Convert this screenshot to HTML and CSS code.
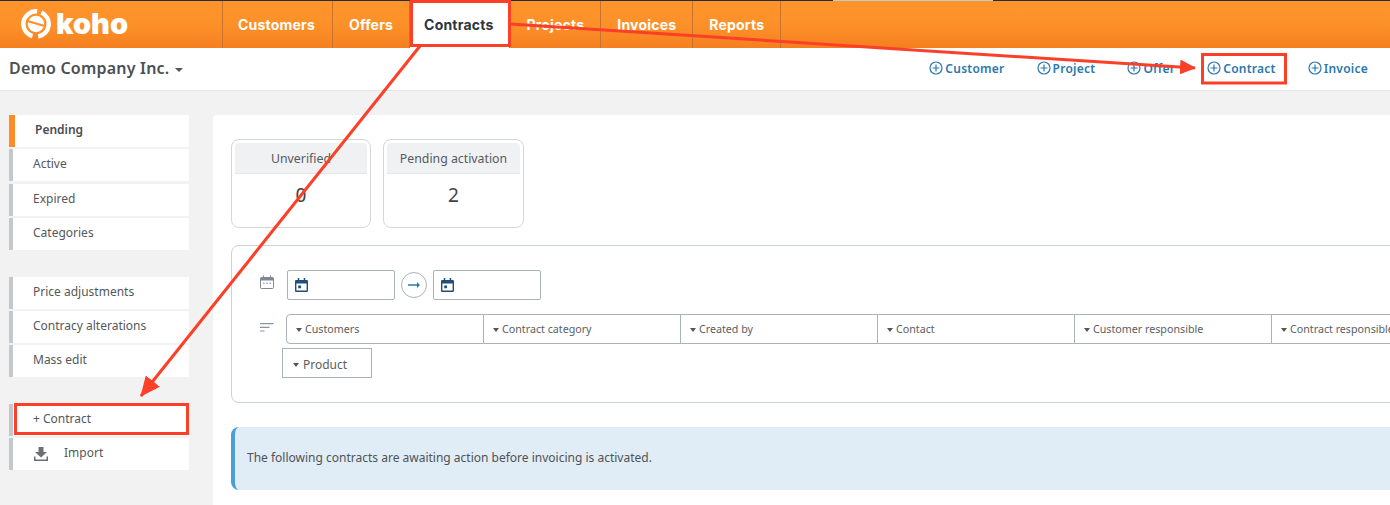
FILE: index.html
```html
<!DOCTYPE html>
<html lang="en">
<head>
<meta charset="utf-8">
<title>Contracts</title>
<link rel="stylesheet" href="styles.css">
</head>
<body>
<header class="topbar">
  <span class="top-sliver"></span>
  <a class="logo">
    <svg class="logo-mark" viewBox="0 0 30 30" width="30" height="30">
      <path d="M20.400 3.500A12.700 12.700 0 0 1 17.200 27.500" fill="none" stroke="#fff" stroke-width="4.500"/>
      <path d="M11.500 27.200A12.700 12.700 0 0 1 16.100 2.350" fill="none" stroke="#fff" stroke-width="4.500"/>
      <circle cx="15" cy="15" r="8.200" fill="#fff"/>
      <path d="M5.500 11.800L24.500 17.300" stroke="#fd8f28" stroke-width="2.200"/>
    </svg>
    <span class="logo-text">koho</span>
  </a>
  <nav class="mainnav">
    <a class="nav-item">Customers</a>
    <a class="nav-item">Offers</a>
    <a class="nav-item active">Contracts</a>
    <a class="nav-item">Projects</a>
    <a class="nav-item">Invoices</a>
    <a class="nav-item">Reports</a>
  </nav>
</header>

<div class="subbar">
  <div class="company">Demo Company Inc. <span class="caret caret-lg"></span></div>
  <div class="quick">
    <a class="quick-item"><svg class="plus" viewBox="0 0 14 14"><circle cx="7" cy="7" r="6"/><path d="M7 3.500v7M3.500 7h7"/></svg>Customer</a>
    <a class="quick-item"><svg class="plus" viewBox="0 0 14 14"><circle cx="7" cy="7" r="6"/><path d="M7 3.500v7M3.500 7h7"/></svg>Project</a>
    <a class="quick-item"><svg class="plus" viewBox="0 0 14 14"><circle cx="7" cy="7" r="6"/><path d="M7 3.500v7M3.500 7h7"/></svg>Offer</a>
    <a class="quick-item"><svg class="plus" viewBox="0 0 14 14"><circle cx="7" cy="7" r="6"/><path d="M7 3.500v7M3.500 7h7"/></svg>Contract</a>
    <a class="quick-item"><svg class="plus" viewBox="0 0 14 14"><circle cx="7" cy="7" r="6"/><path d="M7 3.500v7M3.500 7h7"/></svg>Invoice</a>
  </div>
</div>

<div class="layout">
  <aside class="sidebar">
    <ul class="side-group">
      <li class="side-item current">Pending</li>
      <li class="side-item">Active</li>
      <li class="side-item push">Expired</li>
      <li class="side-item">Categories</li>
    </ul>
    <ul class="side-group">
      <li class="side-item">Price adjustments</li>
      <li class="side-item">Contracy alterations</li>
      <li class="side-item">Mass edit</li>
    </ul>
    <ul class="side-group">
      <li class="side-item">+ Contract</li>
      <li class="side-item import">
        <svg class="import-icon" viewBox="0 0 14 14"><path d="M4.500 0h5v5h3.500L7 10.500 1 5h3.500z"/><path d="M0 9.500h1.500v3h11v-3H14V14H0z"/></svg>
        Import
      </li>
    </ul>
  </aside>

  <main class="panel">
    <section class="stats">
      <div class="stat">
        <div class="stat-head">Unverified</div>
        <div class="stat-value">0</div>
      </div>
      <div class="stat stat-wide">
        <div class="stat-head">Pending activation</div>
        <div class="stat-value">2</div>
      </div>
    </section>

    <section class="filters">
      <div class="filter-row">
        <svg class="row-icon" viewBox="0 0 14 14"><path d="M1.500 2.500h11a1 1 0 0 1 1 1v9a1 1 0 0 1-1 1h-11a1 1 0 0 1-1-1v-9a1 1 0 0 1 1-1z" fill="none" stroke="#7d8894"/><path d="M.5 3.500a1 1 0 0 1 1-1h11a1 1 0 0 1 1 1V5.500H.5z" fill="#7d8894"/><path d="M3 .5h1v2H3zM10 .5h1v2h-1z" fill="#7d8894"/><path d="M3 7.500h1.600v1.400H3zM6.200 7.500h1.600v1.400H6.200zM9.400 7.500h1.600v1.400H9.400z" fill="#a3abb4"/></svg>
        <div class="date-input"><svg class="cal" viewBox="0 0 14 15"><path d="M3 0h1.600v2H9.400V0H11v2h1.600A1.400 1.400 0 0 1 14 3.400v10.200a1.400 1.400 0 0 1-1.400 1.400H1.400A1.400 1.400 0 0 1 0 13.600V3.400A1.400 1.400 0 0 1 1.400 2H3zM1.500 6v7.500h11V6zM3.500 8h3v3h-3z" fill="#1f4e79" fill-rule="evenodd"/></svg></div>
        <div class="arrow-circle"><svg viewBox="0 0 12 6" width="12" height="6"><path d="M0 2.200h9V0l3 3-3 3V3.800H0z" fill="#2a7ab0"/></svg></div>
        <div class="date-input"><svg class="cal" viewBox="0 0 14 15"><path d="M3 0h1.600v2H9.400V0H11v2h1.600A1.400 1.400 0 0 1 14 3.400v10.200a1.400 1.400 0 0 1-1.400 1.400H1.400A1.400 1.400 0 0 1 0 13.600V3.400A1.400 1.400 0 0 1 1.400 2H3zM1.500 6v7.500h11V6zM3.500 8h3v3h-3z" fill="#1f4e79" fill-rule="evenodd"/></svg></div>
      </div>
      <div class="filter-row filter-row-2">
        <svg class="row-icon sort" viewBox="0 0 14 9"><path d="M0 0h13.500v1.200H0zM0 3.700h9.500v1.200H0zM0 7.400h4.500v1.200H0z" fill="#8b95a0"/></svg>
        <div class="drops">
          <div class="drop"><span class="caret"></span>Customers</div>
          <div class="drop"><span class="caret"></span>Contract category</div>
          <div class="drop"><span class="caret"></span>Created by</div>
          <div class="drop"><span class="caret"></span>Contact</div>
          <div class="drop"><span class="caret"></span>Customer responsible</div>
          <div class="drop"><span class="caret"></span>Contract responsible</div>
        </div>
      </div>
      <div class="drop drop-alone"><span class="caret"></span>Product</div>
    </section>

    <section class="alert">The following contracts are awaiting action before invoicing is activated.</section>
  </main>
</div>

<svg class="annot" viewBox="0 0 1390 505" width="1390" height="505">
  <defs>
    <marker id="head" viewBox="0 0 16 15" refX="15" refY="7.500" markerWidth="16" markerHeight="15" markerUnits="userSpaceOnUse" orient="auto"><path d="M0 0L16 7.500 0 15z" fill="#fb4027"/></marker>
    <marker id="head-big" viewBox="0 0 20 18" refX="19" refY="9" markerWidth="20" markerHeight="18" markerUnits="userSpaceOnUse" orient="auto"><path d="M0 0L20 9 0 18z" fill="#fb4027"/></marker>
  </defs>
  <rect x="411.500" y="1.500" width="98" height="44" fill="none" stroke="#fb4027" stroke-width="3"/>
  <rect x="1202.500" y="54.500" width="83" height="28.500" fill="none" stroke="#fb4027" stroke-width="3"/>
  <rect x="15.500" y="404.500" width="172" height="29" fill="none" stroke="#fb4027" stroke-width="3"/>
  <path d="M510 24L1195 68" stroke="#fb4027" stroke-width="3" fill="none" marker-end="url(#head)"/>
  <path d="M420 46L141 396" stroke="#fb4027" stroke-width="3" fill="none" marker-end="url(#head-big)"/>
</svg>
</body>
</html>
```
FILE: styles.css
```css
* { box-sizing: border-box; }
html, body { margin: 0; padding: 0; height: 505px; overflow: hidden; }
body { background: #f2f2f2; font-family: "Noto Sans", sans-serif; color: #4a4d50; position: relative; }
ul { list-style: none; margin: 0; padding: 0; }

.topbar {
  height: 48px;
  display: flex;
  position: relative;
  background: linear-gradient(#ff942b 0%, #fd9129 50%, #f57f20 100%);
  border-top: 1px solid #1e2f3e;
}
.top-sliver { position: absolute; left: 833px; top: -1px; width: 160px; height: 1px; background: #c9c9c9; }
.logo { width: 222px; display: flex; align-items: center; padding-left: 21px; gap: 5px; color: #fff; }
.logo-mark { flex: none; margin-top: -1px; }
.logo-text { font-family: Inter, sans-serif; font-weight: 900; font-size: 29px; line-height: 1; margin-top: -2px; }
.mainnav { display: flex; }
.nav-item {
  display: flex; align-items: center; padding: 0 16px;
  border-left: 1px solid #c8722a;
  font-family: Inter, sans-serif; font-weight: 700; font-size: 14px; letter-spacing: .2px; color: #fff;
}
.nav-item:first-child { padding: 0 17px 0 15px; }
.nav-item:last-child { border-right: 1px solid #c8722a; }
.nav-item.active { background: #fff; color: #2c3540; padding: 0 16px 0 14px; }

.subbar {
  height: 43px; background: #fff; border-bottom: 1px solid #e6e6e6;
  display: flex; align-items: center; justify-content: space-between; padding: 0 22px 2px 9px;
}
.company { font-size: 16px; font-weight: 600; letter-spacing: .2px; color: #4c4f52; }
.caret { display: inline-block; width: 0; height: 0; border-left: 3.500px solid transparent; border-right: 3.500px solid transparent; border-top: 4px solid #555; vertical-align: middle; margin-right: 3px; }
.caret-lg { border-left-width: 4.500px; border-right-width: 4.500px; border-top-width: 4.500px; margin-left: 1px; margin-right: 0; }
.quick { display: flex; gap: 32px; }
.quick-item { display: flex; align-items: center; gap: 2px; font-size: 12px; font-weight: 600; letter-spacing: .25px; color: #2a78ad; }
.plus { width: 14px; height: 14px; fill: none; stroke: #2a78ad; stroke-width: 1.200; flex: none; }

.layout { display: flex; height: 414px; padding: 24px 0 0 9px; }
.sidebar { width: 180px; flex: none; margin-right: 24px; display: flex; flex-direction: column; gap: 27px; }
.side-group { display: flex; flex-direction: column; gap: 2px; }
.side-item {
  height: 32px; background: #fff; border-left: 4px solid #c2c8cc;
  display: flex; align-items: center; padding: 0 0 3px 20px;
  font-size: 12px; color: #55585b;
}
.side-item.push { margin-top: 1px; }
.side-item.current { border-left: 6px solid #fd8c26; padding-left: 20px; font-weight: 600; color: #4a4d50; }
.side-item.import { padding-left: 21px; gap: 16px; }
.import-icon { width: 14px; height: 14px; fill: #6d7073; flex: none; margin-top: 3px; }

.panel { flex: 1; min-width: 0; background: #fff; border-radius: 4px 0 0 0; padding: 24px 0 0 18px; overflow: hidden; }
.stats { display: flex; gap: 12px; }
.stat { width: 140px; height: 89px; border: 1px solid #d3d7da; border-radius: 8px; padding: 3px; text-align: center; }
.stat-wide { width: 141px; }
.stat-head { height: 31px; background: #f0f1f3; border-bottom: 1px solid #e4e6e8; border-radius: 4px 4px 0 0; font-size: 12.300px; color: #555a60; display: flex; align-items: center; justify-content: center; }
.stat-value { font-size: 19px; color: #40444a; line-height: 24px; margin-top: 9px; }

.filters { width: 1220px; height: 158px; margin-top: 17px; border: 1px solid #ccd2d6; border-radius: 8px; padding: 24px 0 0 28px; }
.filter-row { display: flex; align-items: center; height: 30px; }
.row-icon { width: 14px; height: 14px; flex: none; margin-right: 13px; margin-top: -7px; }
.row-icon.sort { height: 9px; margin-right: 12px; margin-top: -4px; }
.date-input { width: 108px; height: 30px; border: 1px solid #a9b3ba; border-radius: 2px; padding: 7px 0 0 7px; }
.cal { width: 13px; height: 14px; display: block; }
.arrow-circle { width: 26px; height: 26px; margin: 0 6px; border: 1px solid #aab4bb; border-radius: 50%; display: flex; align-items: center; justify-content: center; }
.filter-row-2 { margin-top: 14px; }
.drops { display: flex; flex: none; }
.drop { width: 197px; height: 30px; flex: none; border: 1px solid #a9b3ba; border-left-width: 0; display: flex; align-items: center; padding-left: 9px; font-size: 10.700px; color: #5a5e62; }
.drops .drop:first-child { border-left-width: 1px; border-radius: 4px 0 0 4px; width: 198px; }
.drop-alone { width: 90px; margin: 4px 0 0 22px; border-left-width: 1px; padding: 2px 0 0 10px; font-size: 12px; }
.drop .caret { margin-right: 3px; margin-top: 1px; }
.drop-alone .caret { margin-right: 4px; }

.alert { width: 1220px; height: 63px; margin-top: 24px; background: #e0ecf6; border-left: 4px solid #4a9fd4; border-radius: 8px 0 0 8px; display: flex; align-items: center; padding: 0 0 3px 12px; font-size: 12px; color: #4f5357; }

.annot { position: absolute; left: 0; top: 0; pointer-events: none; }
```
